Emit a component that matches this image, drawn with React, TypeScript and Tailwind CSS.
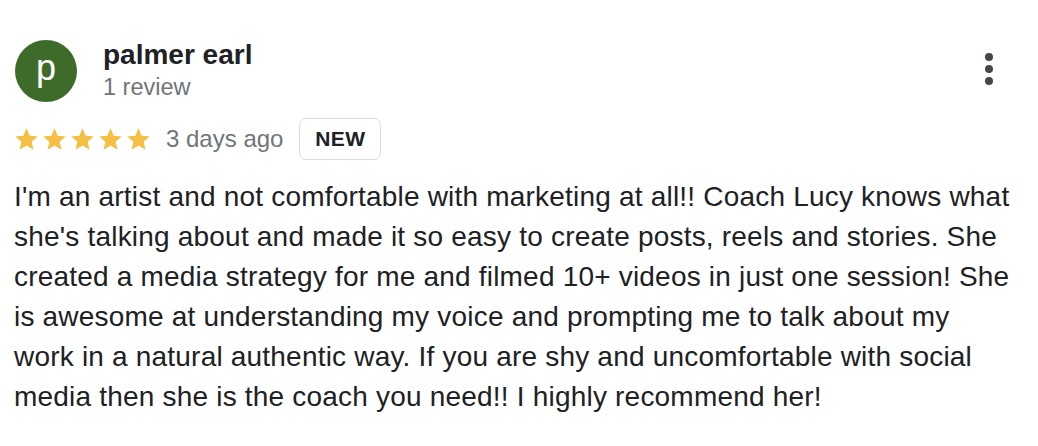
import React from "react";

const Star = () => (
  <svg width="27" height="27" viewBox="0 0 24 24" className="block">
    <path
      fill="#f4bf42"
      d="M12 17.27L18.18 21l-1.64-7.03L22 9.24l-7.19-.61L12 2 9.19 8.63 2 9.24l5.46 4.73L5.82 21z"
    />
  </svg>
);

const lines = [
  "I'm an artist and not comfortable with marketing at all!! Coach Lucy knows what",
  "she's talking about and made it so easy to create posts, reels and stories. She",
  "created a media strategy for me and filmed 10+ videos in just one session! She",
  "is awesome at understanding my voice and prompting me to talk about my",
  "work in a natural authentic way. If you are shy and uncomfortable with social",
  "media then she is the coach you need!! I highly recommend her!",
];

export default function App() {
  return (
    <div className="w-[1038px] h-[446px] bg-white pl-[14px] pt-[38px] overflow-hidden font-['Liberation_Sans',Arial,sans-serif]">
      <div className="flex items-start">
        <div className="mt-[2px] ml-[1px] w-[62px] h-[62px] rounded-full bg-[#3f6b2a] flex items-center justify-center text-white text-[36px] leading-none pb-[6px]">
          p
        </div>
        <div className="ml-[26px] flex flex-col">
          <div className="text-[28px] leading-[34px] font-bold text-[#202124]">
            palmer earl
          </div>
          <div className="mt-[1px] text-[23.5px] leading-[28px] text-[#70757a]">
            1 review
          </div>
        </div>
        <div className="ml-auto mr-[45px] mt-[15px] flex flex-col gap-[4px]">
          <div className="w-[8px] h-[8px] rounded-full bg-[#444746]" />
          <div className="w-[8px] h-[8px] rounded-full bg-[#444746]" />
          <div className="w-[8px] h-[8px] rounded-full bg-[#444746]" />
        </div>
      </div>

      <div className="mt-[16px] flex items-center h-[42px]">
        <div className="flex items-center gap-[1px] -ml-[1px]">
          <Star />
          <Star />
          <Star />
          <Star />
          <Star />
        </div>
        <div className="ml-[14px] text-[24px] text-[#70757a] leading-none">
          3 days ago
        </div>
        <div className="ml-[16px] w-[82px] h-[42px] rounded-[7px] border-[1.5px] border-[#dadce0] flex items-center justify-center text-[21px] font-bold tracking-[0.5px] text-[#202124]">
          NEW
        </div>
      </div>

      <div className="mt-[17px] text-[28px] leading-[40px] tracking-[0.2px] text-[#202124]">
        {lines.map((l, i) => (
          <div key={i} className="whitespace-nowrap">
            {l}
          </div>
        ))}
      </div>
    </div>
  );
}
